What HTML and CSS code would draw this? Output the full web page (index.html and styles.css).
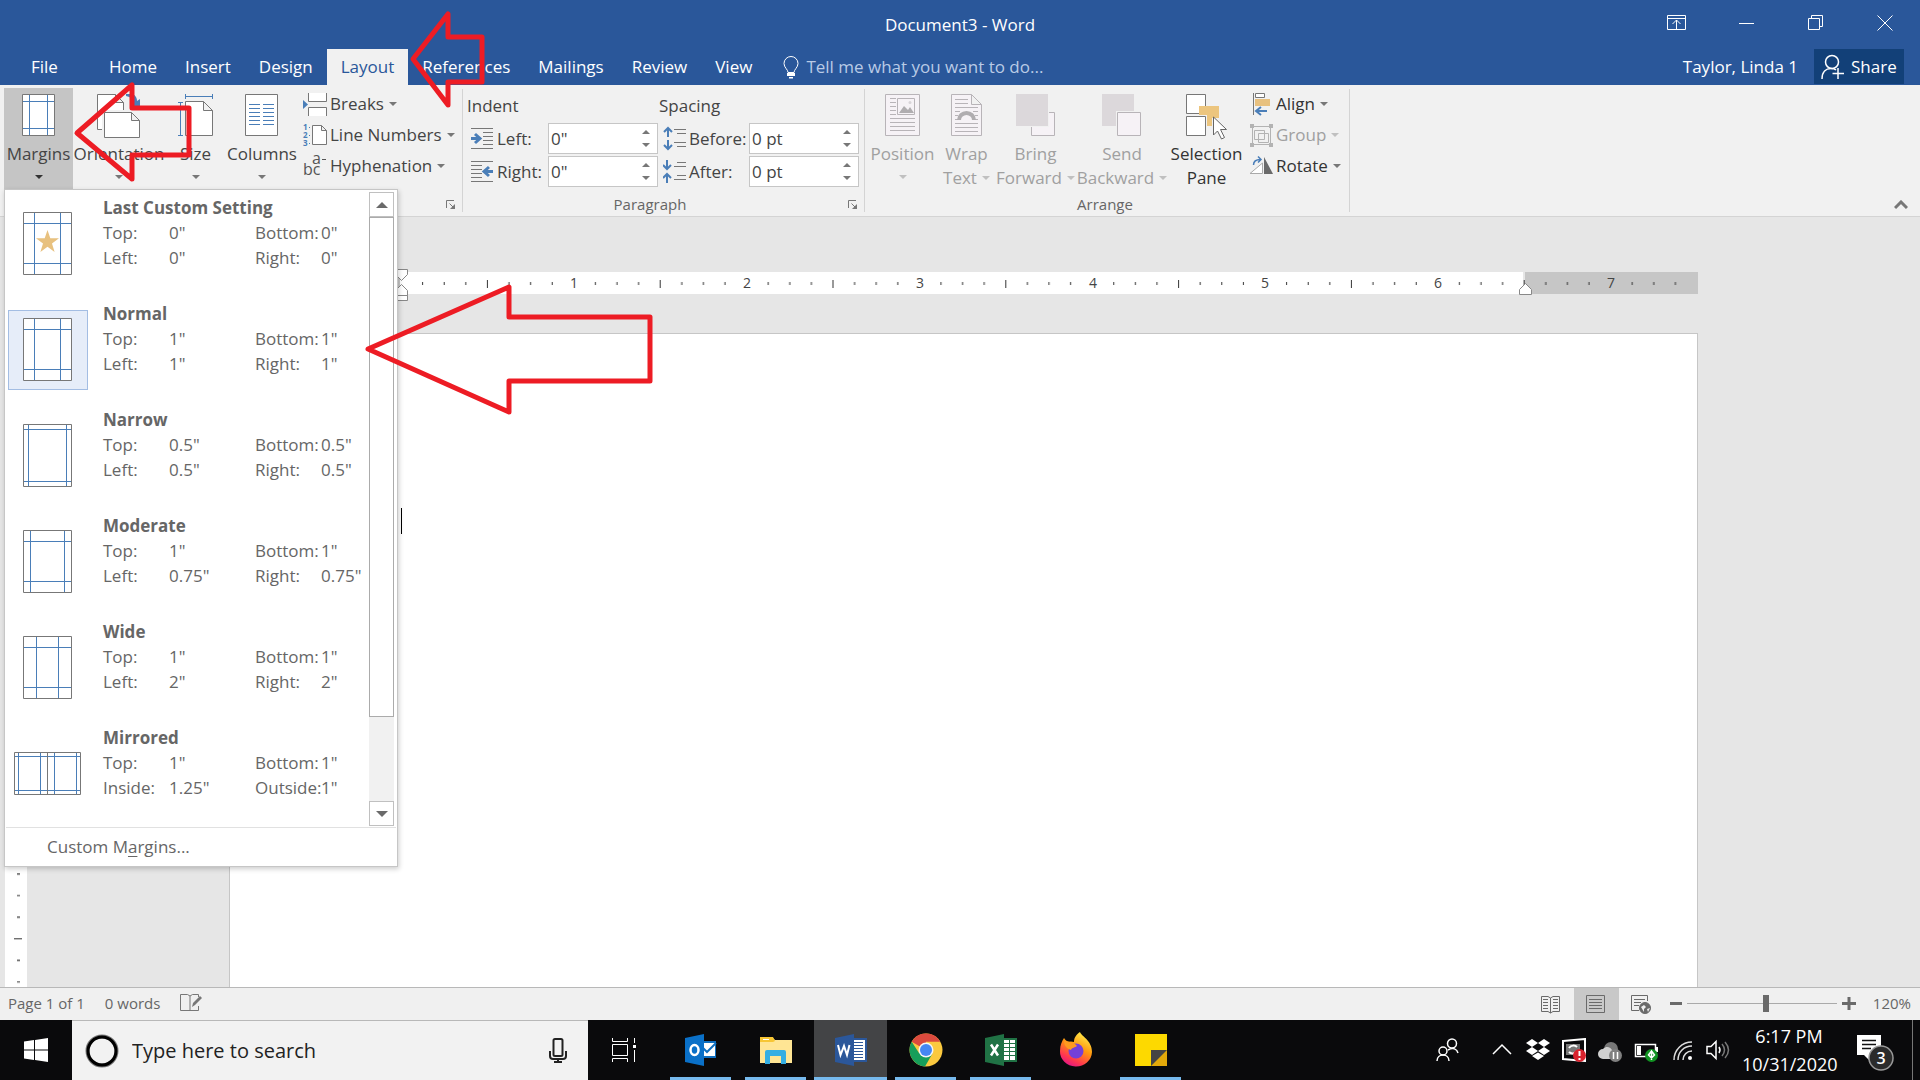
FILE: index.html
```html
<!DOCTYPE html>
<html lang="en">
<head>
    <meta charset="UTF-8">
    <meta name="viewport" content="width=device-width, initial-scale=1.0">
    <title>Document3 - Word</title>
    <link rel="stylesheet" href="styles.css">
</head>
<body>
    <header class="titlebar">
        <h1>Document3 - Word</h1>
        <div class="window-buttons">
            <button aria-label="Ribbon display options"><svg width="19" height="16" viewBox="0 0 19 16"><path d="M.5.5h18v14H.5zM.5 3.500h18M9.500 14V5M5.500 9l4-4 4 4"/></svg></button>
            <button aria-label="Minimize"><svg width="16" height="16" viewBox="0 0 16 16"><path d="M0 8.500h15"/></svg></button>
            <button aria-label="Restore"><svg width="16" height="16" viewBox="0 0 16 16"><path d="M.5 3.500h11v11H.5zM3.500 3.500v-3h11v11h-3"/></svg></button>
            <button aria-label="Close"><svg width="16" height="16" viewBox="0 0 16 16"><path d="M.5.5l15 15M15.500.5l-15 15"/></svg></button>
        </div>
    </header>

    <nav class="tabs">
        <a href="#" class="tab tab-file">File</a>
        <a href="#" class="tab">Home</a>
        <a href="#" class="tab">Insert</a>
        <a href="#" class="tab">Design</a>
        <a href="#" class="tab active">Layout</a>
        <a href="#" class="tab">References</a>
        <a href="#" class="tab">Mailings</a>
        <a href="#" class="tab">Review</a>
        <a href="#" class="tab">View</a>
        <button class="tell-me">
            <svg width="16" height="23" viewBox="0 0 16 23"><path d="M5 16.500c0-3-4-5-4-9a7 7 0 0 1 14 0c0 4-4 6-4 9z" fill="none" stroke="#fff"/><path d="M4 17h8v3H4zM6 21h4v1.500H6z" fill="#fff"/></svg>
            Tell me what you want to do...
        </button>
        <a href="#" class="account">Taylor, Linda 1</a>
        <button class="share">
            <svg width="23" height="26" viewBox="0 0 23 26" fill="none" stroke="#fff" stroke-width="1.500"><circle cx="11" cy="8" r="6.500"/><path d="M1 25c0-7 4-10.500 9-10.500 2 0 4 .5 5 1.500M17 14v11M11.500 19.500H23"/></svg>
            Share
        </button>
    </nav>

    <section class="ribbon">
        <div class="group group-setup" aria-label="Page Setup">
            <div class="group-body">
                <button class="big open">
                    <svg width="34" height="43" viewBox="0 0 34 43"><path class="paper" d="M.5.5h32v41H.5z"/><path class="blue" d="M7.500 1v40M25.500 1v40M1 7.500h31M1 34.500h31"/></svg>
                    <span>Margins</span><i class="caret"></i>
                </button>
                <button class="big">
                    <svg width="44" height="45" viewBox="0 0 44 45"><path class="paper" d="M.5.5h18l8 8v27H.5zM18.500.5v8h8"/><path d="M5 16h39v29H5z" fill="#f1f1f1"/><path class="paper" d="M7.500 18.500h27l8 8v17h-35zM34.500 18.500v8h8"/><path d="M29 0h7c3 2 4 4 4 7l3-2v8h-9l3-3c-1-5-3-7-8-8z" fill="#4a7eb8"/></svg>
                    <span>Orientation</span><i class="caret"></i>
                </button>
                <button class="big">
                    <svg width="36" height="43" viewBox="0 0 36 43"><path class="paper" d="M7.500 7.500h18l9 9v25h-27zM25.500 7.500v9h9"/><path class="blue" d="M7 2.500h28M7.500 0v5M34.500 0v5M2.500 8v34M0 8.500h5M0 41.500h5"/></svg>
                    <span>Size</span><i class="caret"></i>
                </button>
                <button class="big">
                    <svg width="34" height="43" viewBox="0 0 34 43"><path class="paper" d="M.5.5h32v41H.5z"/><path class="blue" d="M4 10.500h11M4 14.500h11M4 18.500h11M4 22.500h11M4 26.500h11M4 30.500h11M18 10.500h11M18 14.500h11M18 18.500h11M18 22.500h11M18 26.500h11M18 30.500h11"/></svg>
                    <span>Columns</span><i class="caret"></i>
                </button>
                <div class="stack">
                    <button class="small">
                        <svg width="24" height="24" viewBox="0 0 24 24"><path class="paper" d="M5.500 1v8.500h18V1M5.500 24v-8.500h18V24"/><path d="M0 8l5 4.500L0 17z" fill="#4a7eb8"/></svg>
                        Breaks<i class="caret"></i>
                    </button>
                    <button class="small">
                        <svg width="24" height="24" viewBox="0 0 24 24"><path class="paper" d="M9.500 2.500h9l5 5v14h-14zM18.500 2.500v5h5"/><text class="digits" x="0" y="7">1</text><text class="digits" x="0" y="15">2</text><text class="digits" x="0" y="23">3</text><path class="blue" d="M6 4.500h1M6 12.500h1M6 20.500h1"/></svg>
                        Line Numbers<i class="caret"></i>
                    </button>
                    <button class="small">
                        <svg width="24" height="24" viewBox="0 0 24 24"><text class="hyph" x="9" y="10">a</text><text class="hyph" x="0" y="21">bc</text><path d="M19 5.500h4" stroke="#555"/></svg>
                        Hyphenation<i class="caret"></i>
                    </button>
                </div>
            </div>
            <button class="launcher" aria-label="Page setup options"><svg width="10" height="10" viewBox="0 0 10 10"><path d="M.5 8V.5H8M3.500 3.500l4 4" fill="none" stroke="#777"/><path d="M9 4v5H4z" fill="#777"/></svg></button>

            <div class="margins-menu">
                <div class="menu-main">
                    <div class="options">
                        <button class="option">
                            <span class="thumb"><svg width="49" height="63" viewBox="0 0 49 63"><path class="paper" d="M.5.5h48v62H.5z"/><path class="blue" d="M11.500 1v61M37.500 1v61M1 11.500h47M1 51.500h47"/><path d="M24.500 18l2.800 8.200h8.700l-7 5.200 2.600 8.600-7.100-5.200-7.100 5.200 2.600-8.600-7-5.200h8.700z" fill="#e8c17f"/></svg></span>
                            <span class="details"><b>Last Custom Setting</b><span>Top:</span><span>0"</span><span>Bottom:</span><span>0"</span><span>Left:</span><span>0"</span><span>Right:</span><span>0"</span></span>
                        </button>
                        <button class="option selected">
                            <span class="thumb"><svg width="49" height="63" viewBox="0 0 49 63"><path class="paper" d="M.5.5h48v62H.5z"/><path class="blue" d="M11.500 1v61M37.500 1v61M1 11.500h47M1 51.500h47"/></svg></span>
                            <span class="details"><b>Normal</b><span>Top:</span><span>1"</span><span>Bottom:</span><span>1"</span><span>Left:</span><span>1"</span><span>Right:</span><span>1"</span></span>
                        </button>
                        <button class="option">
                            <span class="thumb"><svg width="49" height="63" viewBox="0 0 49 63"><path class="paper" d="M.5.5h48v62H.5z"/><path class="blue" d="M5.500 1v61M43.500 1v61M1 5.500h47M1 57.500h47"/></svg></span>
                            <span class="details"><b>Narrow</b><span>Top:</span><span>0.5"</span><span>Bottom:</span><span>0.5"</span><span>Left:</span><span>0.5"</span><span>Right:</span><span>0.5"</span></span>
                        </button>
                        <button class="option">
                            <span class="thumb"><svg width="49" height="63" viewBox="0 0 49 63"><path class="paper" d="M.5.5h48v62H.5z"/><path class="blue" d="M7.500 1v61M41.500 1v61M1 11.500h47M1 51.500h47"/></svg></span>
                            <span class="details"><b>Moderate</b><span>Top:</span><span>1"</span><span>Bottom:</span><span>1"</span><span>Left:</span><span>0.75"</span><span>Right:</span><span>0.75"</span></span>
                        </button>
                        <button class="option">
                            <span class="thumb"><svg width="49" height="63" viewBox="0 0 49 63"><path class="paper" d="M.5.5h48v62H.5z"/><path class="blue" d="M13.500 1v61M35.500 1v61M1 11.500h47M1 51.500h47"/></svg></span>
                            <span class="details"><b>Wide</b><span>Top:</span><span>1"</span><span>Bottom:</span><span>1"</span><span>Left:</span><span>2"</span><span>Right:</span><span>2"</span></span>
                        </button>
                        <button class="option">
                            <span class="thumb"><svg width="67" height="43" viewBox="0 0 67 43"><path class="paper" d="M.5.5h66v42H.5z"/><path class="blue" d="M4.500 1v41M26.500 1v41M40.500 1v41M62.500 1v41M1 4.500h65M1 38.500h65"/><path class="paper" d="M33.500 1v41"/></svg></span>
                            <span class="details"><b>Mirrored</b><span>Top:</span><span>1"</span><span>Bottom:</span><span>1"</span><span>Inside:</span><span>1.25"</span><span>Outside:</span><span>1"</span></span>
                        </button>
                    </div>
                    <div class="scrollbar">
                        <button aria-label="Scroll up"><i class="arrow arrow-up"></i></button>
                        <div class="scroll-thumb"></div>
                        <div class="scroll-track"></div>
                        <button aria-label="Scroll down"><i class="arrow"></i></button>
                    </div>
                </div>
                <button class="custom">Custom M<u>a</u>rgins...</button>
            </div>
        </div>

        <div class="group group-paragraph">
            <div class="group-body">
                <div class="fields fields-indent">
                    <h2>Indent</h2>
                    <svg width="23" height="23" viewBox="0 0 23 23"><path class="lines" d="M0 1.500h22M12 5.500h10M12 9.500h10M12 13.500h10M12 17.500h10M0 21.500h22"/><path class="arrows" d="M0 11.500h8M4 7l5 4.500L4 16"/></svg>
                    <label for="indent-left">Left:</label>
                    <div class="spin"><input id="indent-left" type="text" value='0"'><button aria-label="Increase"><i class="caret up"></i></button><button aria-label="Decrease"><i class="caret"></i></button></div>
                    <svg width="23" height="23" viewBox="0 0 23 23"><path class="lines" d="M0 1.500h22M0 5.500h11M0 9.500h11M0 13.500h11M0 17.500h11M0 21.500h22"/><path class="arrows" d="M22 11.500h-8M18 7l-5 4.500 5 4.500"/></svg>
                    <label for="indent-right">Right:</label>
                    <div class="spin"><input id="indent-right" type="text" value='0"'><button aria-label="Increase"><i class="caret up"></i></button><button aria-label="Decrease"><i class="caret"></i></button></div>
                </div>
                <div class="fields fields-spacing">
                    <h2>Spacing</h2>
                    <svg width="23" height="25" viewBox="0 0 23 25"><path class="lines" d="M11 3.500h12M14 7.500h9M11 16.500h12M14 20.500h9"/><path class="arrows thin" d="M5 11V2M1 6l4-4 4 4M5 14v9M1 19l4 4 4-4"/></svg>
                    <label for="space-before">Before:</label>
                    <div class="spin"><input id="space-before" type="text" value="0 pt"><button aria-label="Increase"><i class="caret up"></i></button><button aria-label="Decrease"><i class="caret"></i></button></div>
                    <svg width="23" height="25" viewBox="0 0 23 25"><path class="lines" d="M14 3.500h9M11 7.500h12M14 16.500h9M11 20.500h12"/><path class="arrows thin" d="M4 1v9M0 6l4 4 4-4M4 24v-9M0 19l4-4 4 4"/></svg>
                    <label for="space-after">After:</label>
                    <div class="spin"><input id="space-after" type="text" value="0 pt"><button aria-label="Increase"><i class="caret up"></i></button><button aria-label="Decrease"><i class="caret"></i></button></div>
                </div>
            </div>
            <div class="group-label">Paragraph</div>
            <button class="launcher" aria-label="Paragraph options"><svg width="10" height="10" viewBox="0 0 10 10"><path d="M.5 8V.5H8M3.500 3.500l4 4" fill="none" stroke="#777"/><path d="M9 4v5H4z" fill="#777"/></svg></button>
        </div>

        <div class="group group-arrange">
            <div class="group-body">
                <button class="big" disabled>
                    <svg width="35" height="43" viewBox="0 0 35 43"><path class="ghost" d="M.5.5h34v41H.5z"/><path class="ghost" d="M5 4.500h6M5 8.500h6M5 12.500h6M5 16.500h6M5 20.500h6M5 24.500h25M5 28.500h25M5 32.500h25M5 36.500h25M12.500 4.500h17v16h-17z"/><path d="M14 19l5-7 4 4 2-3 4 6z" fill="#b0adb0"/><circle cx="25" cy="8.500" r="1.500" fill="#d8d4d8"/></svg>
                    <span>Position</span><i class="caret"></i>
                </button>
                <button class="big two-line" disabled>
                    <svg width="31" height="43" viewBox="0 0 31 43"><path class="ghost" d="M.5.5h20l10 10v31H.5zM20.500.5v10h10"/><path class="ghost" d="M4 5.500h13M4 9.500h13M4 13.500h23M4 17.500h5M22 17.500h5M4 21.500h3M24 21.500h3M4 25.500h3M24 25.500h3M4 29.500h23M4 33.500h23M4 37.500h23"/><path d="M8 26a7.500 7 0 0 1 15 0" fill="none" stroke="#b0adb0" stroke-width="4"/></svg>
                    <span>Wrap</span><span>Text<i class="caret"></i></span>
                </button>
                <button class="big two-line" disabled>
                    <svg width="40" height="43" viewBox="0 0 40 43"><path class="ghost" d="M15.500 18.500h23v23h-23z"/><path d="M0 0h33v33H0z" fill="#f1f1f1"/><path d="M0 0h32v32H0z" fill="#dcd8db"/></svg>
                    <span>Bring</span><span>Forward<i class="caret"></i></span>
                </button>
                <button class="big two-line" disabled>
                    <svg width="40" height="43" viewBox="0 0 40 43"><path d="M0 0h32v32H0z" fill="#dcd8db"/><path d="M14 17h26v26H14z" fill="#f1f1f1"/><path class="ghost" d="M15.500 18.500h23v23h-23z"/></svg>
                    <span>Send</span><span>Backward<i class="caret"></i></span>
                </button>
                <button class="big two-line dark">
                    <svg width="42" height="46" viewBox="0 0 42 46"><path class="paper" d="M.5.5h19v19H.5zM.5 22.500h19v19H.5z"/><path d="M13 12h20v12h-7v8h-5V21h-8z" fill="#ecc57e"/><path d="M27.500 23v18l4-4 4 8 3-1.500-4-8h6z" fill="#fff" stroke="#666"/></svg>
                    <span>Selection</span><span>Pane</span>
                </button>
                <div class="stack">
                    <button class="small dark">
                        <svg width="24" height="24" viewBox="0 0 24 24"><path class="paper" d="M4.500 1v22M6.500 1.500h9v4h-9z"/><path d="M6 7h15v7H6z" fill="#e8c17f"/><path class="arrows thin" d="M18 19H8M12 15l-5 4 5 4"/></svg>
                        Align<i class="caret"></i>
                    </button>
                    <button class="small" disabled>
                        <svg width="24" height="24" viewBox="0 0 24 24"><path d="M3.500 3.500h18v18h-18zM5.500 7.500h10v9h-10zM9.500 10.500h10v9h-10z" fill="none" stroke="#b3b3b3"/><path d="M1 1h4v4H1zM20 1h4v4h-4zM1 20h4v4H1zM20 20h4v4h-4z" fill="#b3b3b3"/></svg>
                        Group<i class="caret"></i>
                    </button>
                    <button class="small dark">
                        <svg width="24" height="24" viewBox="0 0 24 24"><path d="M1 19.500L13.500 9v10.500z" fill="#fff" stroke="#aaa"/><path d="M15 3v17h9z" fill="#6a6a6a"/><path class="blue" d="M4.500 11c0-4 3-5.500 7-5.500M9 2.500l3 3-3 3" stroke-width="1.500"/></svg>
                        Rotate<i class="caret"></i>
                    </button>
                </div>
            </div>
            <div class="group-label">Arrange</div>
        </div>
        <button class="collapse" aria-label="Collapse the ribbon"><svg width="14" height="10" viewBox="0 0 14 10"><path d="M1 8l6-6 6 6" fill="none" stroke="#777" stroke-width="3"/></svg></button>
    </section>

    <main class="workspace">
        <div class="side-ruler">
            <svg width="22" height="100%">
                <defs><pattern id="vticks" width="22" height="172.8" patternUnits="userSpaceOnUse"><path d="M12 21.600h3M12 43.200h3M12 64.800h3M9 86.400h8M12 108h3M12 129.600h3M12 151.200h3" stroke="#333"/></pattern></defs>
                <rect width="22" height="100%" fill="#fff"/><rect width="22" height="100%" fill="url(#vticks)"/>
            </svg>
        </div>
        <div class="canvas">
            <svg class="ruler" width="1469" height="33" viewBox="0 0 1469 33">
                <defs><pattern id="hticks" x="172" width="172.8" height="33" patternUnits="userSpaceOnUse"><path d="M21.600 13v3M43.200 13v3M64.800 13v3M86.400 11v8M108 13v3M129.600 13v3M151.200 13v3" stroke="#333"/></pattern></defs>
                <rect y="3" width="171" height="22" fill="#c6c6c6"/>
                <rect x="171" y="3" width="1123" height="22" fill="#fff"/>
                <rect x="1296" y="3" width="173" height="22" fill="#c6c6c6"/>
                <rect x="180" width="1280" height="33" fill="url(#hticks)"/>
                <g class="ruler-numbers"><text x="345" y="19">1</text><text x="518" y="19">2</text><text x="691" y="19">3</text><text x="864" y="19">4</text><text x="1036" y="19">5</text><text x="1209" y="19">6</text><text x="1382" y="19">7</text></g>
                <g fill="#fff" stroke="#888"><path d="M166.500.5h12v5l-6 6-6-6z"/><path d="M166.500 26.500v-5l6-6 6 6v5zM166.500 26.500h12v5h-12z"/><path d="M1290.500 25.500v-5l6-6 6 6v5z"/></g>
            </svg>
            <div class="sheet"><span class="cursor"></span></div>
        </div>
    </main>

    <footer class="statusbar">
        <span>Page 1 of 1</span>
        <span>0 words</span>
        <button aria-label="Proofing"><svg width="22" height="20" viewBox="0 0 22 20"><path d="M10 17.500H.5v-16h7L10 3l2.500-1.500h6V4M10 3v15M18.500 13v4.500H10" fill="none" stroke="#777"/><path d="M12 14l1-4 7-7 2 2-7 7z" fill="#777"/></svg></button>
        <div class="views">
            <button aria-label="Read mode"><svg width="20" height="19" viewBox="0 0 20 19"><path d="M9.500 3L7 1.500H.5v15H7L9.500 18l2.500-1.500h6.500v-15H12zM9.500 3v15M2 4.500h5M2 7.500h5M2 10.500h5M2 13.500h5M12 4.500h5M12 7.500h5M12 10.500h5M12 13.500h5"/></svg></button>
            <button class="current" aria-label="Print layout"><svg width="20" height="19" viewBox="0 0 20 19"><path d="M.5.5h18v17H.5zM3 4.500h13M3 7.500h13M3 10.500h13M3 13.500h13"/></svg></button>
            <button aria-label="Web layout"><svg width="20" height="19" viewBox="0 0 20 19"><path d="M8 15.500H.5V.5h16V6M3 4.500h11M3 7.500h7M3 10.500h5"/><circle cx="14" cy="13" r="5.500" fill="#6a6a6a"/><path d="M10 12l3-2 2 2-2 2v3zM16 14l3-1-2 4z" fill="#f0f0f0" stroke="none"/></svg></button>
        </div>
        <div class="zoom">
            <button aria-label="Zoom out"><svg width="12" height="15" viewBox="0 0 12 15"><path d="M0 7.500h12" stroke-width="3"/></svg></button>
            <input type="range" min="0" max="100" value="53" aria-label="Zoom">
            <button aria-label="Zoom in"><svg width="14" height="15" viewBox="0 0 14 15"><path d="M0 7.500h14M7 1v13" stroke-width="3"/></svg></button>
        </div>
        <span>120%</span>
    </footer>

    <div class="taskbar">
        <button class="start" aria-label="Start"><svg width="24" height="24" viewBox="0 0 24 24"><path d="M0 3.500L10 2v9.500H0zM11 2l13-2v11.500H11zM0 12.500h10V22L0 20.500zM11 12.500h13V24l-13-2z" fill="#fff"/></svg></button>
        <div class="search">
            <svg width="34" height="34" viewBox="0 0 34 34"><circle cx="17" cy="17" r="14.500" fill="none" stroke="#777" stroke-width="4"/><circle cx="17" cy="17" r="14" fill="none" stroke="#000" stroke-width="3"/></svg>
            <input type="text" placeholder="Type here to search" aria-label="Search">
            <svg width="18" height="26" viewBox="0 0 18 26"><rect x="4.500" y="1" width="9" height="17" rx="1.500" fill="none" stroke="#222" stroke-width="2"/><path d="M1 13v5q0 3 3 3h10q3 0 3-3v-5M9 21v3M5 24h8" fill="none" stroke="#222" stroke-width="2"/></svg>
        </div>
        <button class="task-view" aria-label="Task view"><svg width="24" height="24" viewBox="0 0 24 24"><path d="M.5 0v3.500h15V0M.5 6.500h15v11H.5zM.5 24v-3.500h15V24M22.500 0v5M22.500 12v12" fill="none" stroke="#fff"/><path d="M21 7h3v3h-3z" fill="#fff"/></svg></button>
        <button class="app running" aria-label="Outlook"><svg width="32" height="32" viewBox="0 0 32 32"><path d="M17 7h14v17H17z" fill="#0f6fc0"/><path d="M18 9l12 0v13H18z" fill="#fff"/><path d="M18 14l4 4 9-9" fill="none" stroke="#0f6fc0" stroke-width="2"/><path d="M0 4l19-4v32L0 28z" fill="#0a70c8"/><ellipse cx="9.500" cy="16" rx="4" ry="5" fill="none" stroke="#fff" stroke-width="2.500"/></svg></button>
        <button class="app running" aria-label="File Explorer"><svg width="32" height="32" viewBox="0 0 32 32"><path d="M0 4h13l2 2h17v23H0z" fill="#ffe594"/><path d="M0 3h13l2 4-2 1H0z" fill="#f7c634"/><path d="M3 5.500h6" stroke="#fff"/><path d="M5 30V18q0-2 2-2h17q2 0 2 2v12h-5v-8H10v8z" fill="#35aee2"/></svg></button>
        <button class="app running current" aria-label="Word"><svg width="32" height="32" viewBox="0 0 32 32"><path d="M18 4h14v24H18z" fill="#2b579a"/><path d="M18 6h12v20H18z" fill="#fff"/><path d="M18 8.500h10M18 11.500h10M18 14.500h10M18 17.500h10M18 20.500h10M18 23.500h10" stroke="#2b579a"/><path d="M0 4l19-4v32L0 28z" fill="#2b579a"/><path d="M3 11l2.500 10L9 12l3 9 2.500-10" fill="none" stroke="#fff" stroke-width="2"/></svg></button>
        <button class="app running" aria-label="Chrome"><svg width="34" height="34" viewBox="0 0 34 34"><circle cx="17" cy="17" r="16.500" fill="#fbc93f"/><path d="M17 17L2.700 8.800A16.500 16.500 0 0 1 31.300 8.800H17z" fill="#db4a3e"/><path d="M2.700 8.800A16.500 16.500 0 0 0 16 33.500l7.500-13L17 17l-7 3z" fill="#169e5a"/><circle cx="17" cy="17" r="7.500" fill="#f5f5f5"/><circle cx="17" cy="17" r="6" fill="#4587f3"/></svg></button>
        <button class="app running" aria-label="Excel"><svg width="32" height="32" viewBox="0 0 32 32"><path d="M18 4h14v24H18z" fill="#207245"/><path d="M18 6h12v20H18z" fill="#fff"/><path d="M18 9.500h12M18 13.500h12M18 17.500h12M18 21.500h12M24.500 6v20" stroke="#207245"/><path d="M0 4l19-4v32L0 28z" fill="#207245"/><path d="M6 10.500l7 11M13 10.500l-7 11" stroke="#fff" stroke-width="2.500"/></svg></button>
        <button class="app" aria-label="Firefox"><svg width="34" height="42" viewBox="0 0 34 42"><defs><linearGradient id="fx" x1=".8" y1="0" x2=".3" y2="1"><stop offset="0" stop-color="#fff44f"/><stop offset=".45" stop-color="#ff980e"/><stop offset=".8" stop-color="#ff3750"/><stop offset="1" stop-color="#e31587"/></linearGradient></defs><path d="M21 3c1 4 12 8 12 20A16 15 0 0 1 1 22C1 16 3 12 5 9l3 4q4-1 7 0c0-5 3-8 6-10z" fill="url(#fx)"/><circle cx="17" cy="22" r="7.500" fill="#7440d9"/><path d="M5 11c3 1 7 2 11 4l2 2c-2 2-5 1-6 4-3-1-7-3-7-10z" fill="#ff9a1f"/></svg></button>
        <button class="app running" aria-label="Sticky Notes"><svg width="32" height="32" viewBox="0 0 32 32"><path d="M0 0h32v32H0z" fill="#fdd900"/><path d="M16 16h16v16H16z" fill="#e3a90a"/><path d="M16 32V16h16z" fill="#444"/></svg></button>

        <div class="tray">
            <button class="people" aria-label="People"><svg width="24" height="24" viewBox="0 0 24 24"><circle cx="16" cy="5.500" r="4.500"/><circle cx="7" cy="13" r="4"/><path d="M1 23c0-4 3-6 6-6s6 2 6 6M12 12c5-3 9-1 10 3"/></svg></button>
            <button aria-label="Show hidden icons"><svg width="24" height="24" viewBox="0 0 24 24"><path d="M3 16l9-9 9 9"/></svg></button>
            <button aria-label="Dropbox"><svg width="24" height="24" viewBox="0 0 24 24"><path d="M6 1l6 4-6 4-6-4zM18 1l6 4-6 4-6-4zM6 9l6 4-6 4-6-4zM18 9l6 4-6 4-6-4zM12 14.500l6 3.500-6 4-6-4z" fill="#fff" stroke="none"/></svg></button>
            <button aria-label="Security"><svg width="24" height="24" viewBox="0 0 24 24"><path d="M1 3l22-2v22L1 21z" stroke-width="2"/><path d="M4 6h14v11H4z" fill="#777" stroke="none"/><path d="M7 10c2-3 6-3 8-1M15 13c-2 3-6 3-8 1" stroke-width="2"/><circle cx="17.500" cy="17.500" r="6.500" fill="#d9232e" stroke="none"/><path d="M17.500 13v5M17.500 20v2" stroke-width="2"/></svg></button>
            <button aria-label="OneDrive"><svg width="24" height="24" viewBox="0 0 24 24"><circle cx="13" cy="11" r="7" fill="#777" stroke="none"/><path d="M5 21a5 5 0 0 1 0-10c4-4 8-1 9 1l5 9z" fill="#d0d0d0" stroke="none"/><circle cx="17.500" cy="17.500" r="6.500" fill="#808080" stroke="none"/><path d="M15.500 14v7M19.500 14v7"/></svg></button>
            <button aria-label="Battery"><svg width="24" height="24" viewBox="0 0 24 24"><path d="M1.500 6.500h20v12h-20z"/><path d="M3 8h4v9H3zM22 9h2v5h-2z" fill="#fff" stroke="none"/><circle cx="17.500" cy="17.500" r="6.500" fill="#119322" stroke="none"/><path d="M17.500 13l3 4-3 3-3-3zM17.500 15v7"/></svg></button>
            <button aria-label="Network"><svg width="24" height="24" viewBox="0 0 24 24"><path d="M4 22C4 12 12 4 22 4M8 22c0-8 6-14 14-14M13 22c0-5 4-9 9-9" stroke="#ddd"/><circle cx="20" cy="20" r="2" fill="#fff" stroke="none"/></svg></button>
            <button aria-label="Volume"><svg width="24" height="24" viewBox="0 0 24 24"><path d="M1 8.500h4l5-5v17l-5-5H1zM13 9q2 3 0 6"/><path d="M16 6q5 6 0 12M19 4q7 8 0 16" stroke="#777"/></svg></button>
            <div class="clock"><span>6:17 PM</span><span>10/31/2020</span></div>
            <button class="notify" aria-label="Notifications"><svg width="38" height="38" viewBox="0 0 38 38"><path d="M1 2h24v20H13v5l-5-5H1z" fill="#fff" stroke="none"/><path d="M6 7.500h14M6 11.500h14M6 15.500h9" stroke="#111"/><circle cx="25" cy="25" r="12" fill="#2b2b2b" stroke="#999"/><text x="25" y="31">3</text></svg></button>
            <button class="show-desktop" aria-label="Show desktop"></button>
        </div>
    </div>

    <!-- red pointers -->
    <svg class="pointers" width="660" height="420" viewBox="0 0 660 420">
        <path d="M413 59l35-45v23h34v45h-34v23z"/>
        <path d="M77 133l55-48v23h57v47h-57v24z"/>
        <path d="M368 349l141-62v30h141v64H509v31z"/>
    </svg>
</body>
</html>
```
FILE: styles.css
```css
:root {
    --word: #2a579a;
    --ribbon: #f1f1f1;
    --text: #444;
    --muted: #666;
    --disabled: #a0a0a0;
    --line: #d4d4d4;
    --blue: #4a7eb8;
}

* {
    margin: 0;
    padding: 0;
    box-sizing: border-box;
}

body {
    font-family: "Open Sans", "Noto Sans", sans-serif;
    font-size: 17px;
    line-height: 24px;
    color: var(--text);
    min-height: 100vh;
    display: flex;
    flex-direction: column;
    position: relative;
    overflow: hidden;
}

button {
    font: inherit;
    color: inherit;
    background: none;
    border: none;
}

a {
    color: inherit;
    text-decoration: none;
}

svg {
    display: block;
    flex: none;
}

/* Title bar */
.titlebar {
    display: grid;
    grid-template-columns: 1fr auto 1fr;
    align-items: center;
    height: 49px;
    background: var(--word);
    color: #fff;
}

.titlebar h1 {
    grid-column: 2;
    font-size: 17px;
    font-weight: 400;
}

.window-buttons {
    display: flex;
    justify-content: flex-end;
    gap: 53px;
    padding: 0 27px 4px 0;
}

.window-buttons path {
    fill: none;
    stroke: #fff;
}

/* Tabs */
.tabs {
    display: flex;
    align-items: stretch;
    height: 36px;
    padding-right: 16px;
    background: var(--word);
    color: #fff;
    line-height: 36px;
}

.tab {
    padding: 0 14px;
}

.tab-file {
    padding: 0 37px 0 31px;
}

.tab.active {
    background: var(--ribbon);
    color: var(--word);
}

.tell-me {
    display: flex;
    align-items: center;
    gap: 7px;
    margin-left: 17px;
    color: #b9cbe6;
}

.account {
    margin-left: auto;
    margin-right: 16px;
}

.share {
    display: flex;
    align-items: center;
    gap: 7px;
    width: 90px;
    height: 35px;
    padding-left: 7px;
    background: #124078;
}

/* Ribbon */
.ribbon {
    display: flex;
    position: relative;
    height: 132px;
    background: var(--ribbon);
    border-bottom: 1px solid var(--line);
}

.group {
    display: flex;
    flex-direction: column;
    position: relative;
    padding-top: 3px;
}

.group::after {
    content: '';
    position: absolute;
    top: 4px;
    bottom: 4px;
    right: 0;
    border-right: 1px solid var(--line);
}

.group-setup {
    width: 463px;
    padding-left: 4px;
}

.group-paragraph {
    width: 402px;
    padding-left: 4px;
}

.group-arrange {
    width: 485px;
    padding-left: 3px;
}

.group-body {
    display: grid;
    flex: 1;
}

.group-setup .group-body {
    grid-template-columns: 69px 92px 61px 77px auto;
}

.group-paragraph .group-body {
    grid-template-columns: 192px auto;
}

.group-arrange .group-body {
    grid-template-columns: 69px 59px 79px 94px 75px auto;
}

.group-arrange .stack {
    padding-left: 5px;
}

.group-label {
    height: 22px;
    padding-right: 8px;
    font-size: 15px;
    line-height: 20px;
    text-align: center;
    color: var(--muted);
}

.group-paragraph .group-label {
    padding-right: 32px;
}

.launcher {
    position: absolute;
    right: 7px;
    bottom: 6px;
}

.big {
    display: grid;
    grid-template-rows: 48px 24px 22px;
    justify-items: center;
    align-content: start;
    padding-top: 6px;
    white-space: nowrap;
}

.group-setup .big:nth-child(4) {
    padding-right: 5px;
}

.big.open {
    background: #c5c5c5;
}

.big.two-line {
    grid-template-rows: 48px 24px 24px;
}

.big.dark,
.small.dark {
    color: #333;
}

.big:disabled,
.small:disabled {
    color: var(--disabled);
}

.caret {
    display: inline-block;
    align-self: center;
    border: 4px solid transparent;
    border-top-color: #777;
    border-bottom: none;
}

.caret.up {
    border-top: none;
    border-bottom: 4px solid #777;
}

.open .caret {
    border-top-color: #333;
}

:disabled .caret {
    border-top-color: #c0c0c0;
}

.big span .caret {
    margin: 0 0 4px 5px;
}

.stack {
    display: grid;
    grid-template-rows: repeat(3, 31px);
    align-content: start;
    justify-items: start;
}

.small {
    display: flex;
    align-items: center;
    gap: 3px;
    white-space: nowrap;
}

.small svg {
    overflow: visible;
}

.small .caret {
    margin-left: 2px;
}

.paper {
    fill: #fff;
    stroke: #777;
}

.blue {
    fill: none;
    stroke: var(--blue);
}

.ghost {
    fill: #f6f2f6;
    stroke: #b8b4b8;
}

.lines {
    fill: none;
    stroke: #777;
}

.arrows {
    fill: none;
    stroke: var(--blue);
    stroke-width: 3;
}

.arrows.thin {
    stroke-width: 2;
}

.digits {
    font-size: 8px;
    font-weight: 700;
    fill: var(--blue);
}

.hyph {
    font-size: 16px;
    fill: #555;
}

.fields {
    display: grid;
    grid-template-rows: 33px 31px 31px;
    row-gap: 2px;
    align-items: center;
    align-content: start;
}

.fields-indent {
    grid-template-columns: 30px 51px 110px;
}

.fields-spacing {
    grid-template-columns: 30px 60px 110px;
}

.fields h2 {
    grid-column: 1 / -1;
    font-size: 17px;
    font-weight: 400;
    padding-top: 2px;
}

.fields svg {
    justify-self: center;
}

.spin {
    display: grid;
    grid-template-columns: 1fr 22px;
    grid-template-rows: 13px 13px;
    align-content: center;
    height: 31px;
    background: #fff;
    border: 1px solid #c6c6c6;
}

.spin input {
    grid-row: 1 / 3;
    min-width: 0;
    padding-left: 2px;
    border: none;
    font: inherit;
    color: inherit;
    background: none;
}

.spin button {
    display: grid;
    place-items: center;
}

.collapse {
    position: absolute;
    right: 12px;
    bottom: 6px;
}

/* Margins drop-down */
.margins-menu {
    position: absolute;
    top: 104px;
    left: 4px;
    z-index: 5;
    width: 394px;
    background: #fff;
    border: 1px solid #c6c6c6;
    box-shadow: 1px 2px 5px rgba(0, 0, 0, 0.2);
    color: var(--muted);
}

.menu-main {
    display: flex;
    height: 638px;
    margin: 0 1px;
    padding: 2px 2px 1px 2px;
    border-bottom: 1px solid #e1e1e1;
}

.options {
    flex: 1;
    overflow: hidden;
}

.option {
    display: flex;
    gap: 15px;
    height: 106px;
    padding-top: 3px;
    text-align: left;
}

.thumb {
    display: grid;
    place-items: center;
    width: 80px;
    height: 80px;
    margin-top: 9px;
    padding: 0 1px 1px 0;
    border: 1px solid transparent;
}

.selected .thumb {
    background: #e6edf9;
    border-color: #a3bde3;
}

.details {
    display: grid;
    grid-template-columns: 66px 86px 66px 48px;
    grid-auto-rows: 25px;
    line-height: 25px;
    white-space: nowrap;
}

.details b {
    grid-column: 1 / -1;
}

.scrollbar {
    display: flex;
    flex-direction: column;
    width: 25px;
    background: #f1f1f1;
}

.scrollbar button {
    display: grid;
    place-items: center;
    height: 25px;
    background: #fff;
    border: 1px solid #c0c0c0;
}

.arrow {
    border: 6px solid transparent;
    border-top-color: #6a6a6a;
    border-bottom: none;
}

.arrow-up {
    border-top: none;
    border-bottom: 6px solid #6a6a6a;
}

.scroll-thumb {
    flex: 500;
    background: #fff;
    border: 1px solid #ababab;
}

.scroll-track {
    flex: 84;
}

.custom {
    display: block;
    width: 100%;
    height: 38px;
    padding-left: 42px;
    text-align: left;
}

.custom u {
    text-underline-offset: 3px;
}

/* Document */
.workspace {
    display: flex;
    flex: 1;
    background: #e6e6e6;
}

.side-ruler {
    width: 27px;
    padding: 117px 0 0 5px;
}

.side-ruler svg {
    height: 100%;
}

.canvas {
    display: flex;
    flex: 1;
    flex-direction: column;
    align-items: center;
    padding: 52px 20px 0 0;
}

.ruler-numbers {
    font-size: 14px;
    text-anchor: middle;
    fill: #444;
}

.sheet {
    flex: 1;
    width: 1469px;
    margin-top: 31px;
    padding: 174px 171px 0;
    background: #fff;
    border: 1px solid #c6c6c6;
    border-bottom: none;
}

.cursor {
    display: block;
    height: 26px;
    border-left: 1px solid #000;
}

/* Status bar */
.statusbar {
    display: flex;
    align-items: center;
    gap: 20px;
    height: 33px;
    padding: 0 9px 2px 8px;
    background: #f0f0f0;
    border-top: 1px solid #b8b8b8;
    font-size: 15px;
    color: var(--muted);
}

.views {
    display: flex;
    align-self: stretch;
    margin-left: auto;
    margin-bottom: -2px;
}

.views button {
    display: grid;
    place-items: center;
    width: 45px;
}

.views .current {
    background: #c8c8c8;
}

.views svg,
.zoom svg {
    fill: none;
    stroke: #6a6a6a;
}

.zoom {
    display: flex;
    align-items: center;
    gap: 5px;
    margin-left: -14px;
    margin-right: -3px;
}

.zoom input {
    appearance: none;
    width: 150px;
    height: 18px;
    background: linear-gradient(#aaa, #aaa) center / 100% 1px no-repeat;
}

.zoom input::-webkit-slider-thumb {
    appearance: none;
    width: 6px;
    height: 17px;
    background: #6a6a6a;
}

/* Taskbar */
.taskbar {
    display: flex;
    height: 60px;
    background: #0a0a0c;
    color: #fff;
}

.taskbar button {
    display: grid;
    place-items: center;
}

.start {
    width: 72px;
}

.search {
    display: flex;
    align-items: center;
    width: 516px;
    padding: 0 21px 0 13px;
    background: #f2f2f2;
    border-top: 1px solid #b8b8b8;
}

.search input {
    flex: 1;
    padding-left: 13px;
    border: none;
    background: none;
    font: inherit;
    font-size: 20px;
}

.search input::placeholder {
    color: #222;
}

.task-view {
    width: 71px;
    margin-right: 4px;
}

.app {
    width: 75px;
    position: relative;
}

.app.current {
    background: #434446;
    background-clip: padding-box;
    border: 0 solid transparent;
    border-width: 0 1px;
}

.app.running::after {
    content: '';
    position: absolute;
    left: 7px;
    right: 7px;
    bottom: 0;
    height: 3px;
    background: #76b9ed;
}

.app.current::after {
    left: 0;
    right: 0;
}

.tray {
    display: flex;
    align-items: stretch;
    gap: 12px;
    margin-left: auto;
}

.tray svg {
    fill: none;
    stroke: #fff;
    stroke-width: 1.5;
}

.people {
    margin-right: 18px;
}

.clock {
    display: flex;
    flex-direction: column;
    justify-content: center;
    width: 94px;
    font-size: 18px;
    line-height: 28px;
    text-align: center;
}

.notify {
    margin: 4px 6px 0 8px;
}

.notify text {
    font-size: 16px;
    font-weight: 600;
    text-anchor: middle;
    fill: #fff;
    stroke: none;
}

.show-desktop {
    width: 8px;
    border-left: 1px solid #777;
}

.pointers {
    position: absolute;
    top: 0;
    left: 0;
    z-index: 10;
    pointer-events: none;
    fill: none;
    stroke: #ed1c24;
    stroke-width: 5;
    stroke-linejoin: round;
}
```
